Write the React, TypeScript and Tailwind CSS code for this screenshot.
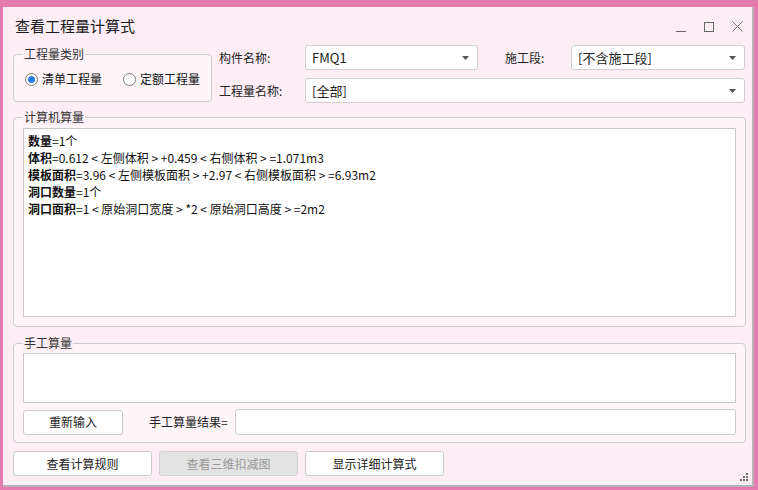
import React from 'react';

const font = { fontFamily: '"Noto Sans CJK SC", "Noto Sans", sans-serif' };

const Arrow = () => (
  <svg width="7" height="4" viewBox="0 0 7 4" className="shrink-0">
    <path d="M0 0h7L3.5 4z" fill="#555" />
  </svg>
);

const Select = ({ value, className }: { value: string; className: string }) => (
  <div className={`h-[25px] shrink-0 flex items-center justify-between pl-[6px] pr-[8px] bg-white border border-[#cfcfcf] rounded-[3px] ${className}`}>
    <span className="text-[13px] text-[#222]">{value}</span>
    <Arrow />
  </div>
);

const Radio = ({ checked, label }: { checked?: boolean; label: string }) => (
  <div className="flex items-center gap-[4px] whitespace-nowrap">
    <span className="w-[13px] h-[13px] shrink-0 rounded-full border border-[#7a7a7a] bg-white flex items-center justify-center">
      {checked && <span className="w-[7px] h-[7px] rounded-full bg-[#2b7de0]" />}
    </span>
    <span className="text-[12px] text-[#111]">{label}</span>
  </div>
);

const Group = ({ title, className, children }: { title: string; className: string; children?: React.ReactNode }) => (
  <div className={`relative border border-[#cdcdcd] rounded-[4px] bg-white/40 ${className}`}>
    <span className="absolute left-[9px] top-[-9px] px-[1px] leading-[16px] text-[12px] text-[#333] bg-[#fdeef5]">{title}</span>
    {children}
  </div>
);

const Btn = ({ label, disabled, className }: { label: string; disabled?: boolean; className: string }) => (
  <div
    className={`h-[25px] shrink-0 flex items-center justify-center rounded-[3px] border text-[12px] ${
      disabled ? 'bg-[#e3e3e3] border-[#d2d2d2] text-[#9a9a9a]' : 'bg-white border-[#cbcbcb] text-[#222]'
    } ${className}`}
  >
    {label}
  </div>
);

const lines: [string, string][] = [
  ['数量', '=1个'],
  ['体积', '=0.612 < 左侧体积 > +0.459 < 右侧体积 > =1.071m3'],
  ['模板面积', '=3.96 < 左侧模板面积 > +2.97 < 右侧模板面积 > =6.93m2'],
  ['洞口数量', '=1个'],
  ['洞口面积', '=1 < 原始洞口宽度 > *2 < 原始洞口高度 > =2m2'],
];

export default function App() {
  return (
    <div className="w-[758px] h-[490px] bg-[#e57aae] pl-[3px] pt-[7px] overflow-hidden" style={font}>
      <div className="w-[751px] h-[480px] bg-[#fdeef5] border-r-2 border-b-2 border-[#b9b3b6] flex flex-col relative">
        {/* title bar */}
        <div className="h-[38px] shrink-0 flex items-center justify-between pl-[12px] pr-[9px]">
          <span className="text-[15px] text-[#1a1a1a]">查看工程量计算式</span>
          <div className="flex items-center gap-[18px] pt-[1px]">
            <svg width="10" height="10" viewBox="0 0 10 10">
              <path d="M0 9.5h10" stroke="#666" strokeWidth="1" />
            </svg>
            <svg width="10" height="10" viewBox="0 0 10 10">
              <rect x="0.5" y="0.5" width="9" height="9" fill="none" stroke="#666" strokeWidth="1" />
            </svg>
            <svg width="11" height="11" viewBox="0 0 11 11">
              <path d="M0.5 0.5l10 10M10.5 0.5l-10 10" stroke="#777" strokeWidth="1" />
            </svg>
          </div>
        </div>

        <div className="pl-[10px] pr-[6px] flex flex-col">
          {/* top section */}
          <div className="flex">
            <Group title="工程量类别" className="w-[199px] h-[48px] shrink-0 mt-[9px] flex items-center gap-[21px] pl-[11px] pt-[2px]">
              <Radio checked label="清单工程量" />
              <Radio label="定额工程量" />
            </Group>
            <div className="ml-[7px] flex flex-col gap-[8px]">
              <div className="flex items-center">
                <span className="w-[86px] shrink-0 text-[12px] text-[#222]">构件名称:</span>
                <Select value="FMQ1" className="w-[173px]" />
                <span className="w-[66px] shrink-0 ml-[27px] text-[12px] text-[#222]">施工段:</span>
                <Select value="[不含施工段]" className="w-[174px]" />
              </div>
              <div className="flex items-center">
                <span className="w-[86px] shrink-0 text-[12px] text-[#222]">工程量名称:</span>
                <Select value="[全部]" className="w-[440px]" />
              </div>
            </div>
          </div>

          {/* computer calc */}
          <Group title="计算机算量" className="mt-[14px] h-[210px] pt-[10px] px-[9px] pb-[9px]">
            <div className="h-full bg-white border border-[#c9c9c9] pl-[4px] pt-[3px]">
              {lines.map(([b, rest], i) => (
                <div key={i} className="h-[17px] leading-[17px] text-[12px] text-[#111] whitespace-pre">
                  <span className="font-bold">{b}</span>
                  <span>{rest}</span>
                </div>
              ))}
            </div>
          </Group>

          {/* manual calc */}
          <Group title="手工算量" className="mt-[16px] h-[100px] pt-[9px] px-[9px] flex flex-col">
            <div className="h-[50px] bg-white border border-[#c9c9c9]" />
            <div className="mt-[6px] flex items-center">
              <Btn label="重新输入" className="w-[100px]" />
              <span className="ml-[26px] w-[86px] shrink-0 text-[12px] text-[#222]">手工算量结果=</span>
              <div className="flex-1 h-[26px] bg-white border border-[#cbcbcb] rounded-[3px]" />
            </div>
          </Group>

          {/* bottom buttons */}
          <div className="mt-[8px] flex gap-[7px]">
            <Btn label="查看计算规则" className="w-[139px]" />
            <Btn label="查看三维扣减图" disabled className="w-[139px]" />
            <Btn label="显示详细计算式" className="w-[139px]" />
          </div>
        </div>

        {/* resize grip */}
        <svg width="9" height="9" viewBox="0 0 9 9" className="absolute right-[3px] bottom-[3px]">
          <g fill="#6f6f6f">
            <rect x="6" y="0" width="2" height="2" />
            <rect x="3" y="3" width="2" height="2" />
            <rect x="6" y="3" width="2" height="2" />
            <rect x="0" y="6" width="2" height="2" />
            <rect x="3" y="6" width="2" height="2" />
            <rect x="6" y="6" width="2" height="2" />
          </g>
        </svg>
      </div>
    </div>
  );
}
